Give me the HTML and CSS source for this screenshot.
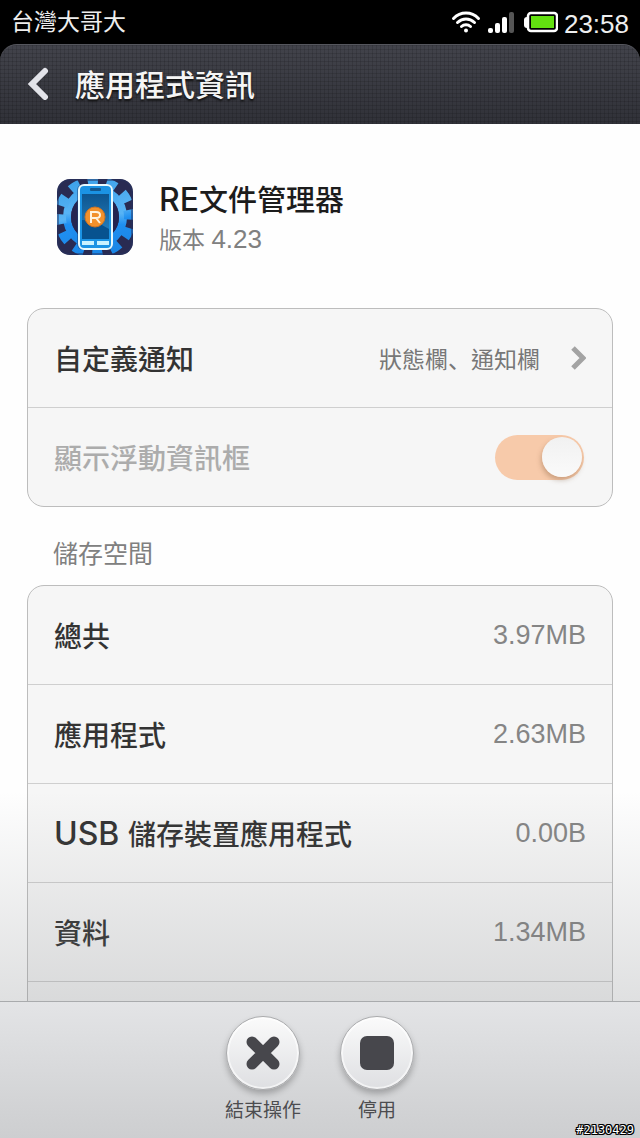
FILE: index.html
```
<!DOCTYPE html>
<html lang="zh-Hant">

<head>
  <meta charset="UTF-8">
  <meta name="viewport" content="width=device-width, initial-scale=1.0">
  <title>應用程式資訊</title>
  <link rel="stylesheet" href="styles.css">
</head>

<body>
  <div class="status-bar">
    <span class="carrier">台灣大哥大</span>
    <div class="status-icons">
      <svg width="30" height="24" viewBox="0 0 30 24" fill="none" stroke="#fff" stroke-width="3" stroke-linecap="round">
        <path d="M2.5 8.5C9.5 1.200 20.500 1.200 27.500 8.500" />
        <path d="M6.500 12.500C11.500 7.800 18.500 7.800 23.500 12.500" />
        <path d="M10.500 16.500C13 14.200 17 14.200 19.500 16.500" />
        <circle cx="15" cy="20.500" r="2" fill="#fff" stroke="none" />
      </svg>
      <svg width="28" height="24" viewBox="0 0 28 24">
        <rect x="1" y="18" width="5" height="5" rx="2" fill="#fff" />
        <rect x="8" y="13" width="5" height="10" rx="2" fill="#fff" />
        <rect x="15" y="7" width="5" height="16" rx="2" fill="#fff" />
        <rect x="22" y="2" width="5" height="21" rx="2" fill="#555" />
      </svg>
      <svg class="battery" width="34" height="24" viewBox="0 0 34 24">
        <rect x="0" y="7" width="6" height="11" rx="3" fill="#fff" />
        <rect x="4" y="3" width="29" height="18" rx="3" fill="#000" stroke="#fff" stroke-width="2.500" />
        <rect x="7" y="6" width="23" height="12" fill="#63e010" />
      </svg>
      <span class="clock">23:58</span>
    </div>
  </div>

  <header class="title-bar">
    <button class="back" type="button" aria-label="返回">
      <svg width="22" height="34" viewBox="0 0 22 34" fill="none" stroke="#e2e3e9" stroke-width="6">
        <path d="M18 5L5 18L18 31" stroke-linecap="round" />
      </svg>
    </button>
    <h1>應用程式資訊</h1>
  </header>

  <main class="content">
    <section class="app-info">
      <svg class="app-icon" width="76" height="76" viewBox="0 0 76 76">
        <defs>
          <clipPath id="tile">
            <rect width="76" height="76" rx="13" />
          </clipPath>
          <linearGradient id="gear" gradientUnits="userSpaceOnUse" x1="0" y1="0" x2="0" y2="76">
            <stop offset="0" stop-color="#3fa3ea" />
            <stop offset="0.45" stop-color="#58b4f5" />
            <stop offset="0.6" stop-color="#1f8ff0" />
            <stop offset="1" stop-color="#1a86e6" />
          </linearGradient>
          <linearGradient id="screen" x1="0" y1="0" x2="0" y2="1">
            <stop offset="0" stop-color="#0d5590" />
            <stop offset="1" stop-color="#2a86c4" />
          </linearGradient>
        </defs>
        <g clip-path="url(#tile)">
          <rect width="76" height="76" fill="#292b52" />
          <!-- gear: 12 teeth, 30 degrees apart -->
          <circle cx="38" cy="38" r="28" fill="none" stroke="url(#gear)" stroke-width="8" />
          <circle cx="38" cy="38" r="35" fill="none" stroke="url(#gear)" stroke-width="12" stroke-dasharray="10 8.326" transform="rotate(-12 38 38)" />
          <circle cx="38" cy="38" r="24" fill="#242450" />
          <rect x="20" y="5" width="36" height="66" rx="6" fill="#1c3f78" opacity="0.5" />
          <rect x="22" y="6" width="33" height="64" rx="5" fill="#1b93e4" stroke="#e7faff" stroke-width="2" />
          <rect x="25" y="15" width="27" height="45" fill="url(#screen)" />
          <path d="M25 41Q38 41 52 50V60H25Z" fill="#07528f" />
          <rect x="33" y="9" width="11" height="3" rx="1" fill="#135890" />
          <path d="M25 62H37V66H25Z M40 62H52V66H40Z" fill="#c9f2ff" />
          <circle cx="38" cy="38" r="10" fill="#f2912c" stroke="#cf7423" />
          <path d="M34 44V33H39Q43 33 43 36T39 39H34M39 39L43 44" fill="none" stroke="#fff3df" stroke-width="2" />
          <rect x="1" y="1" width="74" height="74" rx="12" fill="none" stroke="#25315d" stroke-opacity="0.5" stroke-width="2" />
        </g>
      </svg>
      <div class="app-text">
        <h2><span class="name-latin">RE</span>文件管理器</h2>
        <p>版本 <span class="number">4.23</span></p>
      </div>
    </section>

    <div class="card">
      <a class="row" href="#notifications">
        <span class="label">自定義通知</span>
        <span class="choice">狀態欄<span class="comma" lang="zh-Hans">、</span>通知欄</span>
        <svg class="arrow" width="16" height="24" viewBox="0 0 16 24" fill="none" stroke="#a3a3a3" stroke-width="5">
          <path d="M3 2L13 12L3 22" />
        </svg>
      </a>
      <div class="row">
        <label class="label disabled" for="floating">顯示浮動資訊框</label>
        <input class="switch" type="checkbox" id="floating" checked disabled>
      </div>
    </div>

    <h3>儲存空間</h3>
    <dl class="card storage">
      <div class="row">
        <dt class="label">總共</dt>
        <dd>3.97MB</dd>
      </div>
      <div class="row">
        <dt class="label">應用程式</dt>
        <dd>2.63MB</dd>
      </div>
      <div class="row">
        <dt class="label"><span class="label-latin">USB </span>儲存裝置應用程式</dt>
        <dd>0.00B</dd>
      </div>
      <div class="row">
        <dt class="label">資料</dt>
        <dd>1.34MB</dd>
      </div>
      <div class="row"></div>
    </dl>
  </main>

  <footer class="actions">
    <button class="action" type="button">
      <span class="disc">
        <svg width="36" height="36" viewBox="0 0 36 36" stroke="#47474c" stroke-width="11" stroke-linecap="round">
          <path d="M7 7L29 29M29 7L7 29" />
        </svg>
      </span>
      結束操作
    </button>
    <button class="action" type="button">
      <span class="disc">
        <svg width="36" height="36" viewBox="0 0 36 36">
          <rect x="1" y="1" width="34" height="34" rx="7" fill="#47474c" />
        </svg>
      </span>
      停用
    </button>
    <span class="stamp">#2130429</span>
  </footer>
</body>

</html>
```
FILE: styles.css
```
* {
  box-sizing: border-box;
}

body {
  margin: 0;
  height: 100vh;
  display: flex;
  flex-direction: column;
  background-color: black;
  color: #333;
  font-family: "Liberation Sans", "Noto Sans CJK TC", sans-serif;
}

h1,
h2,
h3,
p,
dl,
dd {
  margin: 0;
}

button {
  padding: 0;
  border: none;
  background: none;
  font-family: inherit;
}

/* status bar */

.status-bar {
  height: 44px;
  padding: 0 11px;
  display: flex;
  flex-shrink: 0;
  align-items: center;
  justify-content: space-between;
  color: #eee;
}

.carrier {
  font-size: 23px;
  line-height: 42px;
}

.status-icons {
  display: flex;
  align-items: center;
  gap: 6px;
}

.battery {
  margin-left: 3px;
}

.clock {
  font-size: 26px;
  line-height: 44px;
  padding-top: 4px;
}

/* title bar */

.title-bar {
  height: 80px;
  padding: 0 27px 3px;
  display: flex;
  flex-shrink: 0;
  align-items: center;
  gap: 26px;
  border-top: 1px solid #55565d;
  border-radius: 17px 17px 0 0;
  background:
    repeating-linear-gradient(90deg, rgba(0, 0, 0, 0.12) 0 1px, transparent 1px 4px),
    repeating-linear-gradient(rgba(0, 0, 0, 0.12) 0 1px, transparent 1px 4px),
    linear-gradient(#42434b, #303138);
}

.back {
  display: flex;
}

h1 {
  color: #f5f5f5;
  font-size: 30px;
  font-weight: 500;
  text-shadow: 0 2px 2px #111;
}

/* content */

.content {
  flex: 1;
  min-height: 0;
  overflow: hidden;
  position: relative;
  padding: 0 27px;
  background-color: #fefefe;
}

.content::after {
  content: "";
  position: absolute;
  left: 0;
  right: 0;
  bottom: 0;
  height: 210px;
  background: linear-gradient(rgba(114, 118, 122, 0), rgba(114, 118, 122, 0.22));
  pointer-events: none;
}

.app-info {
  height: 184px;
  padding: 55px 30px 0;
  display: flex;
  align-items: flex-start;
  gap: 26px;
}

.app-icon {
  flex-shrink: 0;
}

.app-text {
  padding-top: 2px;
}

h2 {
  color: #1c1c1c;
  font-size: 29px;
  line-height: 40px;
  font-weight: 500;
}

.name-latin,
.label-latin {
  font-family: Inter, sans-serif;
  font-size: 32px;
  line-height: 32px;
}

.app-info p {
  color: #808080;
  font-size: 23px;
  line-height: 36px;
}

.number {
  font-size: 26px;
}

.card {
  border: 1px solid #bdbdbd;
  border-radius: 17px;
  background-color: #f6f6f6;
}

.row {
  min-height: 99px;
  padding: 0 26px;
  display: flex;
  align-items: center;
  border-bottom: 1px solid #cfcfcf;
  color: inherit;
  text-decoration: none;
}

.row:last-child {
  min-height: 98px;
  border-bottom: none;
}

.label {
  flex: 1;
  font-size: 28px;
  font-weight: 500;
}

.disabled {
  color: #acacac;
}

.choice {
  color: #777;
  font-size: 23px;
}

.comma {
  font-family: "Noto Sans CJK SC", sans-serif;
}

.arrow {
  margin-left: 30px;
}

.switch {
  appearance: none;
  width: 89px;
  height: 45px;
  margin: 0 2px 0 0;
  padding: 2px;
  display: flex;
  justify-content: flex-end;
  border-radius: 23px;
  background-color: #f7caaa;
}

.switch::before {
  content: "";
  width: 40px;
  height: 40px;
  border-radius: 50%;
  background: linear-gradient(#f1f1f1, #fafafa);
  box-shadow: -1px 3px 5px rgba(120, 80, 50, 0.35);
}

h3 {
  padding: 29px 26px 13px;
  color: #808080;
  font-size: 25px;
  line-height: 36px;
  font-weight: normal;
}

dd {
  color: #858585;
  font-size: 27px;
}

/* bottom actions */

.actions {
  height: 137px;
  padding-top: 14px;
  display: flex;
  flex-shrink: 0;
  justify-content: center;
  align-items: flex-start;
  position: relative;
  border-top: 1px solid #a9abad;
  background: linear-gradient(#e3e4e6, #cdced0);
}

.action {
  width: 114px;
  display: flex;
  flex-direction: column;
  align-items: center;
  gap: 6px;
  color: #4c4c4f;
  font-size: 19px;
  line-height: 30px;
}

.disc {
  width: 74px;
  height: 74px;
  display: flex;
  align-items: center;
  justify-content: center;
  border: 1px solid #aaabad;
  border-radius: 50%;
  background: linear-gradient(#fbfbfb, #dedfe2);
  box-shadow: inset 0 0 0 2px rgba(255, 255, 255, 0.6), 0 4px 6px rgba(0, 0, 0, 0.25);
}

.stamp {
  position: absolute;
  right: 6px;
  bottom: 0;
  color: white;
  font-family: "DejaVu Sans Mono", monospace;
  font-size: 12px;
  line-height: 16px;
  text-shadow: 1px 0 black, -1px 0 black, 0 1px black, 0 -1px black, 1px 1px black, -1px -1px black, 1px -1px black, -1px 1px black;
}
```
